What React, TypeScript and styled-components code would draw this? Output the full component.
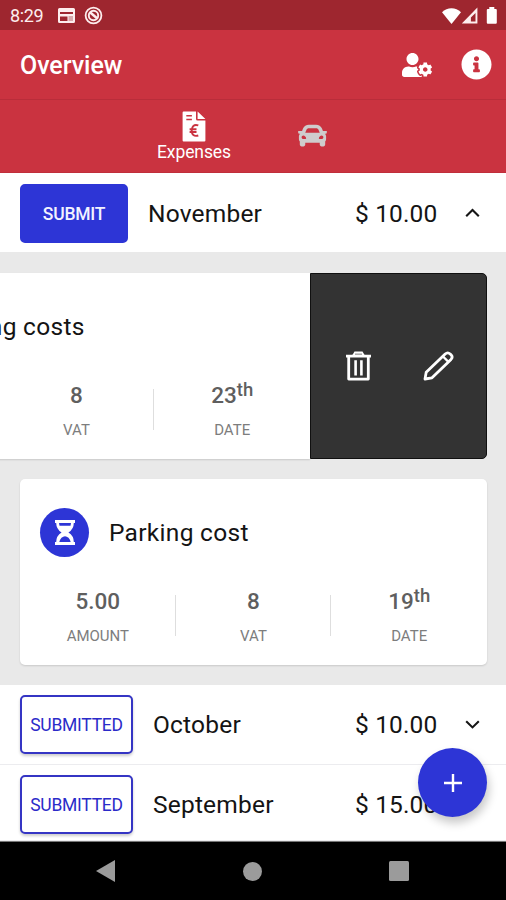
import React from 'react';
import styled, { createGlobalStyle, css } from 'styled-components';
import { FaCar, FaInfoCircle, FaUserCog } from 'react-icons/fa';

const Global = createGlobalStyle`
  * { box-sizing: border-box; }
  body { margin: 0; background: #fff; font-family: Roboto, "Noto Sans", sans-serif; }
`;

const Screen = styled.div`
  position: relative;
  display: flex;
  flex-direction: column;
  width: 506px;
  height: 900px;
  overflow: hidden;
  background: #fff;
  color: #141414;
`;

const StatusBar = styled.div`
  display: flex;
  align-items: center;
  flex: 0 0 30px;
  padding: 1px 9px 0 10px;
  background: #9e262f;
  color: #fdeeee;
`;
const Clock = styled.span`
  width: 48px;
  font-size: 18px;
  line-height: 28px;
  letter-spacing: -0.4px;
`;
const StatusIcons = styled.div<{ $end?: boolean }>`
  display: flex;
  align-items: center;
  gap: ${(p) => (p.$end ? '0' : '9px')};
  margin-left: ${(p) => (p.$end ? 'auto' : '0')};
`;

const Header = styled.header`
  display: flex;
  align-items: center;
  flex: 0 0 70px;
  padding: 0 14px 0 20px;
  background: #ca3340;
  border-bottom: 1px solid #b92d3a;
  color: #fff;
`;
const Title = styled.h1`
  flex: 1;
  margin: 2px 0 0;
  font-size: 25px;
  font-weight: 500;
  letter-spacing: -0.05px;
`;
const HeaderAction = styled.span<{ $gap?: number }>`
  display: flex;
  margin-right: ${(p) => p.$gap ?? 0}px;
`;

const Tabs = styled.nav`
  display: flex;
  justify-content: center;
  flex: 0 0 73px;
  background: #ca3340;
  border-bottom: 1px solid #c02e3b;
`;
const Tab = styled.div<{ $active?: boolean }>`
  display: flex;
  flex-direction: column;
  align-items: center;
  justify-content: ${(p) => (p.$active ? 'flex-start' : 'center')};
  width: 118px;
  padding: ${(p) => (p.$active ? '11px 0 0' : '0 0 1px')};
  color: ${(p) => (p.$active ? '#fff' : '#cfcccc')};
  font-size: 17.5px;
  line-height: 20px;
  letter-spacing: -0.1px;
  svg { display: block; flex: none; }
`;

const MonthRow = styled.div<{ $height: number; $divided?: boolean }>`
  display: flex;
  align-items: flex-start;
  flex: 0 0 ${(p) => p.$height}px;
  padding: ${(p) => (p.$divided ? 9 : 10)}px 26px 0 20px;
  background: #fff;
  ${(p) => p.$divided && css`border-bottom: 1px solid #ececef;`}
`;
const RowLine = styled.div`
  display: flex;
  align-items: center;
  flex: 1;
  height: 60px;
`;
const StateButton = styled.button<{ $done?: boolean }>`
  flex: none;
  width: ${(p) => (p.$done ? 113 : 108)}px;
  height: 59px;
  margin: 0 20px 0 0;
  padding: 2px 0 0;
  border: 2px solid ${(p) => (p.$done ? '#3535c4' : '#2d35d6')};
  border-radius: 5px;
  background: ${(p) => (p.$done ? '#fff' : '#2d35d6')};
  color: ${(p) => (p.$done ? '#2b2bc9' : '#f2f2ff')};
  box-shadow: ${(p) => (p.$done ? '0 2px 3px rgba(0,0,0,.2)' : 'none')};
  font-family: inherit;
  font-size: 17.5px;
  font-weight: ${(p) => (p.$done ? 400 : 500)};
  letter-spacing: -0.25px;
  white-space: nowrap;
`;
const Month = styled.span`
  flex: 1;
  padding-top: 1px;
  font-size: 24.5px;
  letter-spacing: 0.2px;
`;
const Total = styled.span`
  width: 84px;
  margin-right: 26px;
  padding-top: 1px;
  font-size: 24.5px;
  letter-spacing: 0.15px;
  white-space: nowrap;
`;

const Expenses = styled.section`
  display: flex;
  flex-direction: column;
  gap: 20px;
  flex: 0 0 433px;
  padding: 21px 19px 20px 20px;
  background: #e9e9e9;
`;
const SwipeRow = styled.div<{ $open?: boolean }>`
  display: flex;
  height: 186px;
  margin-left: ${(p) => (p.$open ? '-177px' : '0')};
`;
const Card = styled.article<{ $open?: boolean }>`
  flex: 0 0 467px;
  padding: 28px 0 0;
  border-radius: ${(p) => (p.$open ? '5px 0 0 5px' : '5px')};
  background: #fff;
  box-shadow: 0 1px 2px rgba(0, 0, 0, 0.14);
`;
const CardHead = styled.div`
  display: flex;
  align-items: center;
  gap: 20px;
  height: 50px;
  padding-left: 20px;
`;
const Badge = styled.span`
  display: flex;
  align-items: center;
  justify-content: center;
  width: 49px;
  height: 49px;
  border-radius: 50%;
  background: #2d35d6;
`;
const CardTitle = styled.h2`
  margin: 0;
  font-size: 24.5px;
  font-weight: 400;
  letter-spacing: 0.3px;
`;
const Facts = styled.div`
  display: grid;
  grid-template-columns: repeat(3, 1fr);
  height: 74px;
  margin-top: 26px;
`;
const Fact = styled.div`
  display: flex;
  flex-direction: column;
  align-items: center;
  background: linear-gradient(#dedede, #dedede) right 12px / 1px 41px no-repeat;
  &:last-child { background: none; }
`;
const Value = styled.div`
  height: 38px;
  color: #5f5f5f;
  font-size: 22.5px;
  font-weight: 500;
  line-height: 36px;
  sup {
    font-size: 18.5px;
    line-height: 0;
    vertical-align: 7px;
  }
`;
const Label = styled.div`
  color: #7d7d7d;
  font-size: 15px;
  line-height: 31px;
`;
const SwipeActions = styled.div`
  display: flex;
  align-items: center;
  justify-content: space-between;
  flex: 0 0 177px;
  padding: 0 32px 0 34px;
  border: 1px solid #101010;
  border-radius: 0 5px 5px 0;
  background: #333;
`;

const Fab = styled.button`
  position: absolute;
  top: 748px;
  left: 418px;
  display: flex;
  align-items: center;
  justify-content: center;
  width: 69px;
  height: 69px;
  padding: 0;
  border: 0;
  border-radius: 50%;
  background: #2d35d6;
  box-shadow: 2px 6px 10px rgba(0, 0, 0, 0.22);
`;
const SystemNav = styled.div`
  display: flex;
  align-items: center;
  justify-content: space-between;
  flex: 0 0 59px;
  padding: 0 97px 0 96px;
  border-top: 1px solid #777;
  background: #000;
`;

const CalendarGlyph = () => (
  <svg width="17" height="15" viewBox="0 0 17 15">
    <path fill="#fdeeee" fillRule="evenodd" d="M1.5 0h14Q17 0 17 1.5v12q0 1.5-1.5 1.5h-14Q0 15 0 13.5v-12Q0 0 1.5 0zM2 4v2h13V4zm0 4.5V13h7.5V8.5z" />
    <path fill="#d9a9ac" d="M10.5 8H15v5h-4.5z" />
  </svg>
);
const DoNotTrackGlyph = () => (
  <svg width="19" height="19" viewBox="0 0 19 19" fill="none" stroke="#fdeeee">
    <circle cx="9.5" cy="9.5" r="7.9" strokeWidth="1.8" />
    <circle cx="9.5" cy="9.5" r="4.7" strokeWidth="1.9" />
    <path d="M6 6.3l7 6" strokeWidth="2.5" />
  </svg>
);
const WifiGlyph = () => (
  <svg width="19" height="16" viewBox="0 0 19 16">
    <path fill="#fff" d="M0 4.2C5.2-1 13.8-1 19 4.2L9.5 16z" />
  </svg>
);
const SignalGlyph = () => (
  <svg width="17" height="17" viewBox="0 0 17 17">
    <path fill="#fdeeee" fillRule="evenodd" d="M16.4.4v16H.8zM14.5 6l-4.6 4.4v4.1h4.6z" />
  </svg>
);
const BatteryGlyph = () => (
  <svg width="19" height="17" viewBox="0 0 19 17">
    <path fill="#fff" d="M11.3 0h5v2h1.5q1 0 1 1v12.8q0 1-1 1h-8q-1 0-1-1V3q0-1 1-1h1.5z" />
  </svg>
);
const InvoiceGlyph = () => (
  <svg width="24" height="31" viewBox="0 0 24 31">
    <path fill="#fff" d="M1.6.5H14V8q0 1.6 1.6 1.6h7.8v19.8q0 1-1 1H1.6q-1 0-1-1V1.5q0-1 1-1zM15.6.5L23.4 8h-7.8z" />
    <path fill="none" stroke="#ca3340" strokeWidth="1.4" d="M4.3 4.8h5.6M4.3 8.5h5.6" />
    <path fill="none" stroke="#ca3340" strokeWidth="1.9" d="M16.3 14.4c-4.4-1.5-6.6 1.2-6.6 5.1s2.2 6.4 6.6 5M7.6 18.2h6.9M7.6 21h6.9" />
  </svg>
);
const Chevron = ({ up }: { up?: boolean }) => (
  <svg width="15" height="10" viewBox="0 0 15 10" fill="none" stroke="#161616" strokeWidth="2.1">
    <path d={up ? 'M1.2 8.2L7.5 2l6.3 6.2' : 'M1.2 2.2l6.3 6.2 6.3-6.2'} />
  </svg>
);
const Hourglass = () => (
  <svg width="22" height="27" viewBox="0 0 22 27">
    <path fill="#fff" fillRule="evenodd" d="M1 1h20v3h-1.2q0 6.2-5.4 9.5 5.4 3.3 5.4 9.5H21v3H1v-3h1.2q0-6.2 5.4-9.5Q2.2 10.2 2.2 4H1zM5 4l.5 2.7h11L17 4zM5.3 23h11.4q-.5-2.5-2.2-4.2Q11 15.5 7.5 18.8 5.8 20.5 5.3 23z" />
  </svg>
);
const Trash = () => (
  <svg width="27" height="30" viewBox="0 0 27 30">
    <path fill="#fff" d="M7.4 4L9.5.5h8L19.6 4z" />
    <path fill="none" stroke="#fff" strokeWidth="2.8" strokeLinejoin="round" d="M1 5.2h25M3.7 5.2v22.9h19.6V5.2" />
    <path stroke="#fff" strokeWidth="2.6" d="M10.6 9.2v15.3M16.4 9.2v15.3" />
    <path stroke="#aaa" strokeWidth="1.5" d="M10 3.2h7" />
  </svg>
);
const Pencil = () => (
  <svg width="31" height="30" viewBox="0 0 31 30" fill="none" stroke="#fff" strokeWidth="2.8" strokeLinejoin="round">
    <path d="M2 28l1.2-6.7L22.2 3q2.5-2.2 5 0l.8.8q2.2 2.2 0 4.6L9 26.8z" />
    <path d="M20 5.5l5.7 5.6" strokeWidth="2.4" />
  </svg>
);

interface ExpenseProps {
  title: string;
  amount: string;
  vat: string;
  day: string;
  open?: boolean;
}

const ExpenseCard = ({ title, amount, vat, day, open }: ExpenseProps) => (
  <SwipeRow $open={open}>
    <Card $open={open}>
      <CardHead>
        <Badge><Hourglass /></Badge>
        <CardTitle>{title}</CardTitle>
      </CardHead>
      <Facts>
        <Fact><Value>{amount}</Value><Label>AMOUNT</Label></Fact>
        <Fact><Value>{vat}</Value><Label>VAT</Label></Fact>
        <Fact><Value>{day}<sup>th</sup></Value><Label>DATE</Label></Fact>
      </Facts>
    </Card>
    {open && <SwipeActions><Trash /><Pencil /></SwipeActions>}
  </SwipeRow>
);

interface MonthProps {
  name: string;
  total: string;
  height: number;
  state: 'open' | 'submitted';
  expanded?: boolean;
}

const MonthSummary = ({ name, total, height, state, expanded }: MonthProps) => (
  <MonthRow $height={height} $divided={state === 'submitted'}>
    <RowLine>
      <StateButton $done={state === 'submitted'}>{state === 'submitted' ? 'SUBMITTED' : 'SUBMIT'}</StateButton>
      <Month>{name}</Month>
      <Total>{total}</Total>
      <Chevron up={expanded} />
    </RowLine>
  </MonthRow>
);

export default function App() {
  return (
    <>
      <Global />
      <Screen>
        <StatusBar>
          <Clock>8:29</Clock>
          <StatusIcons><CalendarGlyph /><DoNotTrackGlyph /></StatusIcons>
          <StatusIcons $end><WifiGlyph /><SignalGlyph /><BatteryGlyph /></StatusIcons>
        </StatusBar>
        <Header>
          <Title>Overview</Title>
          <HeaderAction $gap={29}><FaUserCog size={30} /></HeaderAction>
          <HeaderAction><FaInfoCircle size={31} /></HeaderAction>
        </Header>
        <Tabs>
          <Tab $active><InvoiceGlyph />Expenses</Tab>
          <Tab><FaCar size={29} /></Tab>
        </Tabs>
        <MonthSummary name="November" total="$ 10.00" height={79} state="open" expanded />
        <Expenses>
          <ExpenseCard title="Parking costs" amount="5.00" vat="8" day="23" open />
          <ExpenseCard title="Parking cost" amount="5.00" vat="8" day="19" />
        </Expenses>
        <MonthSummary name="October" total="$ 10.00" height={80} state="submitted" />
        <MonthSummary name="September" total="$ 15.00" height={76} state="submitted" />
        <Fab>
          <svg width="18" height="18" viewBox="0 0 18 18" stroke="#fff" strokeWidth="2.4"><path d="M9 0v18M0 9h18" /></svg>
        </Fab>
        <SystemNav>
          <svg width="19" height="22" viewBox="0 0 19 22"><path fill="#9b9b9b" d="M19 0v22L0 11z" /></svg>
          <svg width="19" height="19" viewBox="0 0 19 19"><circle cx="9.5" cy="9.5" r="9.5" fill="#9b9b9b" /></svg>
          <svg width="20" height="20" viewBox="0 0 20 20"><rect width="20" height="20" rx="1.5" fill="#9b9b9b" /></svg>
        </SystemNav>
      </Screen>
    </>
  );
}
